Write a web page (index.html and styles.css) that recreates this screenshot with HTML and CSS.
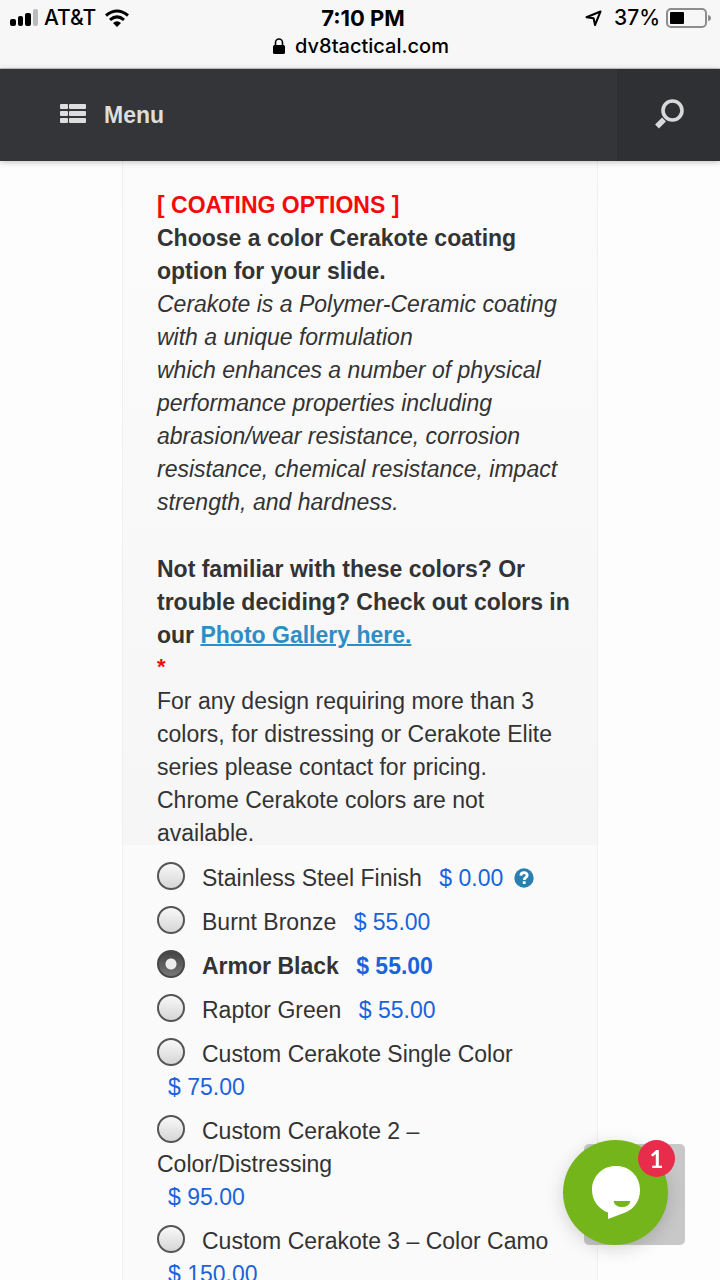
FILE: index.html
```html
<!DOCTYPE html>
<html lang="en">
<head>
<meta charset="utf-8">
<meta name="viewport" content="width=device-width, initial-scale=1">
<title>dv8tactical.com</title>
<link rel="stylesheet" href="styles.css">
</head>
<body>
<div class="browser-bar">
  <div class="status">
    <div class="status-left">
      <svg width="29" height="18" viewBox="0 0 29 18" aria-hidden="true"><rect x="0" y="10" width="6" height="7" rx="2"/><rect x="8" y="7" width="5" height="10" rx="2"/><rect x="15" y="4" width="6" height="13" rx="2"/><rect x="23" y="0" width="5" height="17" rx="2" fill="#bbb"/></svg>
      <span class="carrier">AT&amp;T</span>
      <svg class="wifi" width="26" height="18" viewBox="0 0 26 18" fill="none" stroke="#000" stroke-width="3" aria-hidden="true"><path d="M2 6.500Q13-2.500 24 6.500"/><path d="M6 10.800Q13 5 20 10.800"/><path d="M9 14Q13 10.500 17 14L13 18Z" fill="#000" stroke="none"/></svg>
    </div>
    <div class="time">7:10 PM</div>
    <div class="status-right">
      <svg width="17" height="17" viewBox="0 0 17 17" fill="none" stroke="#000" stroke-width="2" stroke-linejoin="round" aria-hidden="true"><path d="M15.500 1.500 10 15 8.600 8.300 1.500 7.200Z"/></svg>
      <span class="percent">37%</span>
      <svg width="46" height="20" viewBox="0 0 46 20" aria-hidden="true"><rect x="1" y="1" width="39" height="18" rx="4" fill="none" stroke="#8d8d8d" stroke-width="2"/><rect x="4" y="4" width="14" height="12" rx="1"/><path d="M42 7q3 .5 3 3t-3 3z" fill="#8d8d8d"/></svg>
    </div>
  </div>
  <div class="address">
    <svg width="12" height="16" viewBox="0 0 12 16" aria-hidden="true"><rect x="0" y="7" width="12" height="9" rx="1.500"/><path d="M2.500 8V4.500a3.500 3.500 0 0 1 7 0V8" fill="none" stroke="#000" stroke-width="1.600"/></svg>
    <span>dv8tactical.com</span>
  </div>
</div>
<nav class="nav">
  <button class="menu" type="button">
    <svg width="26" height="22" viewBox="0 0 26 22" fill="#dedede" aria-hidden="true"><rect width="8" height="5" rx="1"/><rect x="9" width="17" height="5" rx="1"/><rect y="7" width="8" height="5" rx="1"/><rect x="9" y="7" width="17" height="5" rx="1"/><rect y="14" width="8" height="5" rx="1"/><rect x="9" y="14" width="17" height="5" rx="1"/></svg>
    Menu
  </button>
  <button class="search" type="button" aria-label="Search">
    <svg width="30" height="32" viewBox="0 0 30 32" fill="none" stroke="#d8d8d8" aria-hidden="true"><circle cx="18.500" cy="11.500" r="9.500" stroke-width="3.600"/><path d="M10 20.500 3 27.500" stroke-width="5.500"/></svg>
  </button>
</nav>
<main class="card">
  <section class="intro">
    <p><strong class="heading">[ COATING OPTIONS ]</strong><br>
    <strong>Choose a color Cerakote coating option for your slide.</strong><br>
    <em>Cerakote is a Polymer-Ceramic coating with a unique formulation<br>which enhances a number of physical performance properties including abrasion/wear resistance, corrosion resistance, chemical resistance, impact strength, and hardness.</em></p>
    <p class="question"><strong>Not familiar with these colors? Or trouble deciding? Check out colors in our <a href="#gallery">Photo Gallery here.</a></strong></p>
    <p class="required">*</p>
    <p>For any design requiring more than 3 colors, for distressing or Cerakote Elite series please contact for pricing. Chrome Cerakote colors are not available.</p>
  </section>
  <form class="options">
    <div class="option"><label><input type="radio" name="coating">Stainless Steel Finish <span class="price">$ 0.00</span></label><button class="help" type="button" aria-label="Help"><svg width="20" height="20" viewBox="0 0 20 20" aria-hidden="true"><circle cx="10" cy="10" r="9.700" fill="#2b7fb0"/><path d="M6.800 7.600C7 3.700 13.200 3.800 13.200 7.300 13.200 9.800 10.200 9.600 10.200 12" fill="none" stroke="#fff" stroke-width="2.800"/><rect x="8.800" y="13.200" width="2.800" height="2.800" fill="#fff"/></svg></button></div>
    <div class="option"><label><input type="radio" name="coating">Burnt Bronze <span class="price">$ 55.00</span></label></div>
    <div class="option"><label><input type="radio" name="coating" checked>Armor Black <span class="price">$ 55.00</span></label></div>
    <div class="option"><label><input type="radio" name="coating">Raptor Green <span class="price">$ 55.00</span></label></div>
    <div class="option"><label><input type="radio" name="coating">Custom Cerakote Single Color<br><span class="price">$ 75.00</span></label></div>
    <div class="option"><label><input type="radio" name="coating">Custom Cerakote 2 – Color/Distressing<br><span class="price">$ 95.00</span></label></div>
    <div class="option"><label><input type="radio" name="coating">Custom Cerakote 3 – Color Camo<br><span class="price">$ 150.00</span></label></div>
  </form>
</main>
<div class="to-top"></div>
<button class="chat" type="button" aria-label="Open chat">
  <svg width="50" height="54" viewBox="0 0 50 54" aria-hidden="true"><path d="M25 0C11 0 1 10.500 1 24c0 10.500 6.500 19 16 22.500V53l16-6C43 43.500 49 35 49 24 49 10.500 39 0 25 0Z" fill="#fff"/><path d="M22.500 35H39.500Q38 41 31 41T22.500 35Z" fill="#74b51b"/></svg>
  <span class="badge">1</span>
</button>
</body>
</html>
```
FILE: styles.css
```css
* { box-sizing: border-box; }
body {
  margin: 0;
  height: 100vh;
  overflow: hidden;
  background: #fdfdfd;
  color: #333;
  font: 23px/33px "Liberation Sans", Arial, sans-serif;
}
p { margin: 0; }
button { border: 0; padding: 0; background: none; font: inherit; cursor: pointer; }
svg { display: block; flex: none; }

.browser-bar {
  height: 69px;
  padding: 4px 8px 0 10px;
  background: #f7f7f8;
  border-bottom: 1px solid #c9c9ca;
  color: #000;
  font: 500 20px/28px Inter, sans-serif;
}
.status { display: grid; grid-template-columns: 1fr auto 1fr; align-items: center; }
.status-left, .status-right, .address { display: flex; align-items: center; }
.carrier { margin-left: 5px; font-size: 21px; }
.wifi { margin-left: 8px; }
.time { font-weight: 700; font-size: 22px; padding-left: 4px; }
.status-right { justify-content: flex-end; }
.percent { margin: 0 6px 0 12px; font-size: 21px; }
.address { justify-content: center; gap: 10px; }

.nav {
  position: relative;
  display: flex;
  height: 92px;
  background: #343538;
  box-shadow: 0 1px 6px rgba(0, 0, 0, .25);
}
.menu {
  flex: 1;
  display: flex;
  align-items: center;
  gap: 18px;
  padding-left: 60px;
  color: #dedede;
  font-weight: 700;
}
.search { width: 103px; display: grid; place-items: center; background: #2f3033; }

.card {
  margin: 0 122px;
  border: solid #f0f0f0;
  border-width: 0 1px;
  background: #fafafa;
}
.intro {
  padding: 28px 24px 0 34px;
  background: linear-gradient(#fbfbfb, #f6f6f6) no-repeat 0 0 / 100% calc(100% - 5px);
}
.heading, .required { color: #f50a0a; }
.question { margin-top: 34px; }
.question a { color: #2e8dc5; text-decoration-thickness: 2px; }
.required { margin-bottom: 3px; font-size: 22px; line-height: 30px; font-weight: 700; }

.options { display: grid; gap: 11px; padding: 12px 24px 34px 34px; }
.option input {
  appearance: none;
  width: 28px;
  height: 28px;
  margin: 0 17px 0 0;
  border: 2px solid #555;
  border-radius: 50%;
  background: linear-gradient(#fbfbfb, #d3d3d3) border-box;
  vertical-align: -4px;
}
.option input:checked {
  border-color: #484848;
  background: radial-gradient(circle, #eee 0 5px, transparent 6px), linear-gradient(#444, #777);
}
.option:has(input:checked) { font-weight: 700; }
.price { display: inline-block; margin-left: 11px; color: #1a63dc; }
.help { margin-left: 11px; vertical-align: -2px; }

.to-top {
  position: fixed;
  right: 35px;
  bottom: 35px;
  width: 101px;
  height: 101px;
  border-radius: 5px;
  background: #c8c8c8;
}
.chat {
  position: fixed;
  right: 52px;
  bottom: 35px;
  display: grid;
  place-items: center;
  width: 105px;
  height: 105px;
  border-radius: 50%;
  background: #74b51b;
  box-shadow: 0 4px 18px rgba(0, 0, 0, .16);
}
.badge {
  position: absolute;
  top: 0;
  right: -7px;
  width: 37px;
  height: 37px;
  border-radius: 50%;
  background: #e72d4b;
  color: #fff;
  font: 700 24px/37px Lato, sans-serif;
  text-align: center;
}
```
